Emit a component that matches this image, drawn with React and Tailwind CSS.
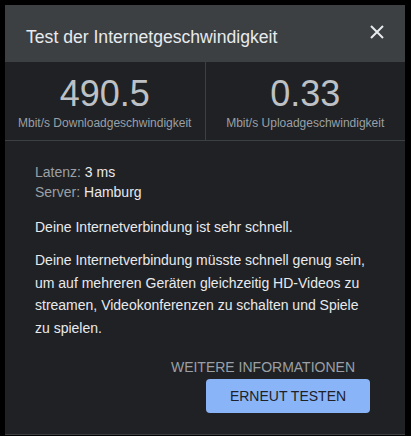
import React from "react";

export default function App() {
  return (
    <div className="w-[411px] h-[436px] bg-black pt-[5px] pl-[5px] overflow-hidden" style={{ fontFamily: '"Liberation Sans", Arial, sans-serif' }}>
      <div className="w-[400px] h-[430px] bg-[#202124] flex flex-col border-b border-[#3c4043]">
        <div className="h-[56px] bg-[#3c4043] flex items-center justify-between pl-[21px] pr-[20px] shrink-0">
          <div className="text-[17.6px] text-[#e8eaed] mt-[8px]">Test der Internetgeschwindigkeit</div>
          <svg width="16" height="16" viewBox="0 0 16 16" className="mb-[2px]">
            <path d="M2 2 L14 14 M14 2 L2 14" stroke="#e8eaed" strokeWidth="2" />
          </svg>
        </div>
        <div className="flex border-y border-[#3c4043] h-[80px] shrink-0">
          <div className="flex-1 flex flex-col items-center pt-[13px] border-r border-[#3c4043]">
            <div className="text-[36px] leading-[37px] text-[#bdc1c6]">490.5</div>
            <div className="text-[12px] leading-[16px] text-[#9aa0a6] mt-[3px]">Mbit/s Downloadgeschwindigkeit</div>
          </div>
          <div className="flex-1 flex flex-col items-center pt-[13px]">
            <div className="text-[36px] leading-[37px] text-[#bdc1c6]">0.33</div>
            <div className="text-[12px] leading-[16px] text-[#9aa0a6] mt-[3px]">Mbit/s Uploadgeschwindigkeit</div>
          </div>
        </div>
        <div className="pl-[30px] pr-[30px] pt-[21px] text-[14px] text-[#e8eaed]">
          <div className="leading-[20px]"><span className="text-[#9aa0a6]">Latenz: </span>3 ms</div>
          <div className="leading-[20px]"><span className="text-[#9aa0a6]">Server: </span>Hamburg</div>
          <div className="mt-[15px] leading-[20px]">Deine Internetverbindung ist sehr schnell.</div>
          <div className="mt-[12px] leading-[22.6px]">Deine Internetverbindung müsste schnell genug sein, um auf mehreren Geräten gleichzeitig HD-Videos zu streamen, Videokonferenzen zu schalten und Spiele zu spielen.</div>
          <div className="flex flex-col items-end mt-[18px] pr-[20px]">
            <div className="text-[#9aa0a6] leading-[20px]">WEITERE INFORMATIONEN</div>
            <button className="mt-[2px] w-[164px] h-[34px] rounded-[4px] bg-[#8ab4f8] text-[#202124] text-[14px] mr-[-15px]">ERNEUT TESTEN</button>
          </div>
        </div>
      </div>
    </div>
  );
}
